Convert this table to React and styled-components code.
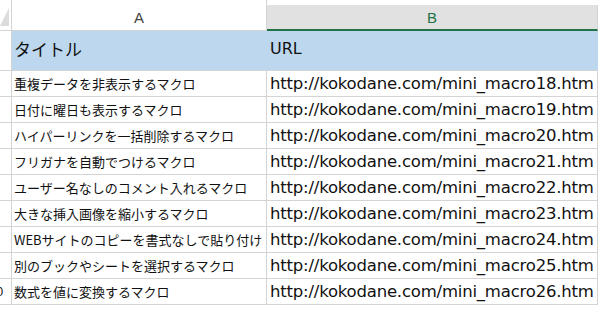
import React from "react";
import styled, { createGlobalStyle } from "styled-components";

const GlobalStyle = createGlobalStyle`
  html, body {
    margin: 0;
    padding: 0;
    background: #ffffff;
  }
  body {
    font-family: "Noto Sans CJK JP", "Noto Sans", sans-serif;
    overflow: hidden;
  }
`;

const GRID = "#d4d4d4";
const HEADER_FILL = "#bdd7ee";
const SELECTED = "#217346";

const Sheet = styled.div`
  display: grid;
  grid-template-columns: 12px 255px 331px;
  grid-auto-rows: 26px;
  grid-template-rows: 31px 40px;
  width: 598px;
`;

const Corner = styled.div`
  position: relative;
  border-right: 1px solid ${GRID};
  border-bottom: 1px solid ${GRID};
  background: #ffffff;
  overflow: hidden;
`;

const CornerTriangle = styled.svg`
  position: absolute;
  left: 0;
  top: 8px;
`;

const ColHeader = styled.div`
  display: flex;
  align-items: center;
  justify-content: center;
  margin-top: ${(p) => (p.$selected ? "5px" : "0")};
  background: ${(p) => (p.$selected ? "#e1e1e1" : "#ffffff")};
  border-right: 1px solid ${GRID};
  border-bottom: ${(p) => (p.$selected ? `2px solid ${SELECTED}` : `1px solid ${GRID}`)};
  color: ${(p) => (p.$selected ? SELECTED : "#444444")};
  font-family: "Liberation Sans", Arial, sans-serif;
  font-size: 15px;
  padding-top: ${(p) => (p.$selected ? "0" : "5px")};
  box-sizing: border-box;
`;

const RowHeader = styled.div`
  border-right: 1px solid ${GRID};
  border-bottom: 1px solid ${GRID};
  overflow: hidden;
  display: flex;
  align-items: center;
`;

/* the row-number column is scrolled mostly out of view; only its right edge shows */
const RowNumber = styled.span`
  flex: none;
  width: 34px;
  margin-left: -21px;
  text-align: center;
  font-family: "Liberation Sans", Arial, sans-serif;
  font-size: 13px;
  color: #222222;
`;

const Cell = styled.div`
  display: flex;
  align-items: center;
  box-sizing: border-box;
  padding: ${(p) =>
    p.$title ? "0 0 5px 2px" : p.$url ? "0 0 1px 3px" : "0 0 1px 2px"};
  background: ${(p) => (p.$fill ? HEADER_FILL : "#ffffff")};
  border-right: 1px solid ${(p) => (p.$fill ? HEADER_FILL : GRID)};
  border-bottom: 1px solid ${GRID};
  white-space: nowrap;
  overflow: hidden;
  color: #111111;
  font-size: ${(p) => (p.$title ? "17px" : p.$url ? "16.5px" : "13px")};
  font-family: ${(p) =>
    p.$url
      ? `"DejaVu Sans", Verdana, sans-serif`
      : `"Noto Sans CJK JP", "Noto Sans", sans-serif`};
  letter-spacing: ${(p) => (p.$url ? "-0.2px" : "0")};
`;

const TitleLabel = styled.span`
  font-family: "DejaVu Sans", Verdana, sans-serif;
  font-size: 16px;
  padding-left: 1px;
`;

const rows = [
  ["重複データを非表示するマクロ", 18],
  ["日付に曜日も表示するマクロ", 19],
  ["ハイパーリンクを一括削除するマクロ", 20],
  ["フリガナを自動でつけるマクロ", 21],
  ["ユーザー名なしのコメント入れるマクロ", 22],
  ["大きな挿入画像を縮小するマクロ", 23],
  ["WEBサイトのコピーを書式なしで貼り付け", 24],
  ["別のブックやシートを選択するマクロ", 25],
  ["数式を値に変換するマクロ", 26],
];

export default function App() {
  return (
    <>
      <GlobalStyle />
      <Sheet>
        <Corner>
          <CornerTriangle width="9" height="18" viewBox="0 0 9 18">
            <polygon points="9,0 9,18 0,18" fill="#dcdcdc" />
          </CornerTriangle>
        </Corner>
        <ColHeader>A</ColHeader>
        <ColHeader $selected>B</ColHeader>

        <RowHeader>
          <RowNumber>1</RowNumber>
        </RowHeader>
        <Cell $fill $title>タイトル</Cell>
        <Cell $fill $title>
          <TitleLabel>URL</TitleLabel>
        </Cell>

        {rows.map(([title, n], i) => (
          <React.Fragment key={n}>
            <RowHeader>
              <RowNumber>{i + 2}</RowNumber>
            </RowHeader>
            <Cell>{title}</Cell>
            <Cell $url>{`http://kokodane.com/mini_macro${n}.htm`}</Cell>
          </React.Fragment>
        ))}
      </Sheet>
    </>
  );
}
